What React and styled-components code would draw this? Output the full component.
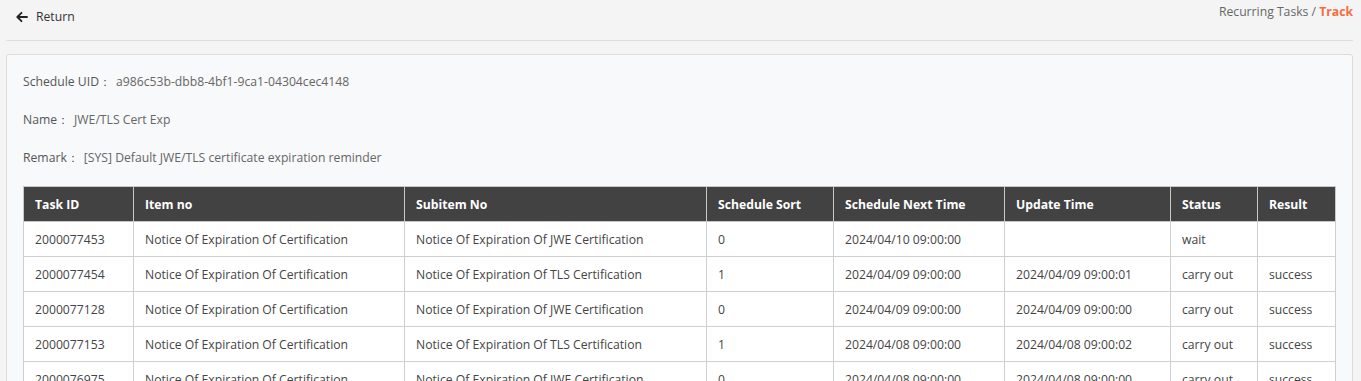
import styled, { createGlobalStyle } from "styled-components"

const GlobalStyle = createGlobalStyle`
  html, body {
    margin: 0;
    padding: 0;
    background: #f4f4f4;
    font-family: "Open Sans", "Noto Sans", sans-serif;
    color: #555;
  }
`

const Page = styled.div`
  padding: 0 8px 0 6px;
`

const TopBar = styled.header`
  height: 40px;
  display: flex;
  justify-content: space-between;
  align-items: flex-start;
  border-bottom: 1px solid #dedede;
`

const ReturnLink = styled.a`
  display: flex;
  align-items: center;
  gap: 8px;
  margin-top: 8px;
  padding-left: 10px;
  font-size: 12.2px;
  color: #333;
  cursor: pointer;
`

const Crumbs = styled.div`
  margin-top: 3px;
  font-size: 12.2px;
  color: #666;
`

const Current = styled.span`
  color: #f26d3d;
  font-weight: 700;
`

const Card = styled.section`
  margin-top: 13px;
  background: #f8f9fa;
  border: 1px solid #dcdcdc;
  border-radius: 3px;
  padding: 17px 16px 0 16px;
  height: 400px;
`

const InfoRow = styled.div`
  font-size: 12.2px;
  color: #555;
  height: 38px;
  line-height: 19px;
`

const Label = styled.span`
  margin-right: 5px;
`

const Value = styled.span`
  color: #666;
`

const Table = styled.table`
  border-collapse: collapse;
  table-layout: fixed;
  width: 100%;
  font-size: 12.2px;
`

const Col = styled.col`
  width: ${p => p.$w}px;
`

const Th = styled.th`
  background: #424242;
  color: #fff;
  font-weight: 700;
  text-align: left;
  height: 34px;
  padding: 0 10px 0 11px;
  border: 1px solid #c8c8c8;
  white-space: nowrap;
`

const Td = styled.td`
  height: 34px;
  padding: 0 10px 0 11px;
  border: 1px solid #cfcfcf;
  color: #444;
  background: #fff;
  white-space: nowrap;
  overflow: hidden;
`

const cols = [
  ["Task ID", 110],
  ["Item no", 271],
  ["Subitem No", 302],
  ["Schedule Sort", 127],
  ["Schedule Next Time", 171],
  ["Update Time", 166],
  ["Status", 87],
  ["Result", 78],
]

const item = "Notice Of Expiration Of Certification"
const jwe = "Notice Of Expiration Of JWE Certification"
const tls = "Notice Of Expiration Of TLS Certification"

const rows = [
  ["2000077453", item, jwe, "0", "2024/04/10 09:00:00", "", "wait", ""],
  ["2000077454", item, tls, "1", "2024/04/09 09:00:00", "2024/04/09 09:00:01", "carry out", "success"],
  ["2000077128", item, jwe, "0", "2024/04/09 09:00:00", "2024/04/09 09:00:00", "carry out", "success"],
  ["2000077153", item, tls, "1", "2024/04/08 09:00:00", "2024/04/08 09:00:02", "carry out", "success"],
  ["2000076975", item, jwe, "0", "2024/04/08 09:00:00", "2024/04/08 09:00:00", "carry out", "success"],
]

function BackArrow() {
  return (
    <svg width="12" height="12" viewBox="0 0 12 12" fill="none" stroke="#222" strokeWidth="1.8" strokeLinecap="round" strokeLinejoin="round">
      <path d="M11 6H1.5M5.5 1.8L1.3 6l4.2 4.2" />
    </svg>
  )
}

export default function App() {
  return (
    <>
      <GlobalStyle />
      <Page>
        <TopBar>
          <ReturnLink>
            <BackArrow />
            Return
          </ReturnLink>
          <Crumbs>
            Recurring Tasks / <Current>Track</Current>
          </Crumbs>
        </TopBar>
        <Card>
          <InfoRow><Label>Schedule UID：</Label><Value>a986c53b-dbb8-4bf1-9ca1-04304cec4148</Value></InfoRow>
          <InfoRow><Label>Name：</Label><Value>JWE/TLS Cert Exp</Value></InfoRow>
          <InfoRow><Label>Remark：</Label><Value>[SYS] Default JWE/TLS certificate expiration reminder</Value></InfoRow>
          <Table>
            <colgroup>
              {cols.map(([name, w]) => <Col key={name} $w={w} />)}
            </colgroup>
            <thead>
              <tr>
                {cols.map(([name]) => <Th key={name}>{name}</Th>)}
              </tr>
            </thead>
            <tbody>
              {rows.map(r => (
                <tr key={r[0]}>
                  {r.map((c, i) => <Td key={i}>{c}</Td>)}
                </tr>
              ))}
            </tbody>
          </Table>
        </Card>
      </Page>
    </>
  )
}
